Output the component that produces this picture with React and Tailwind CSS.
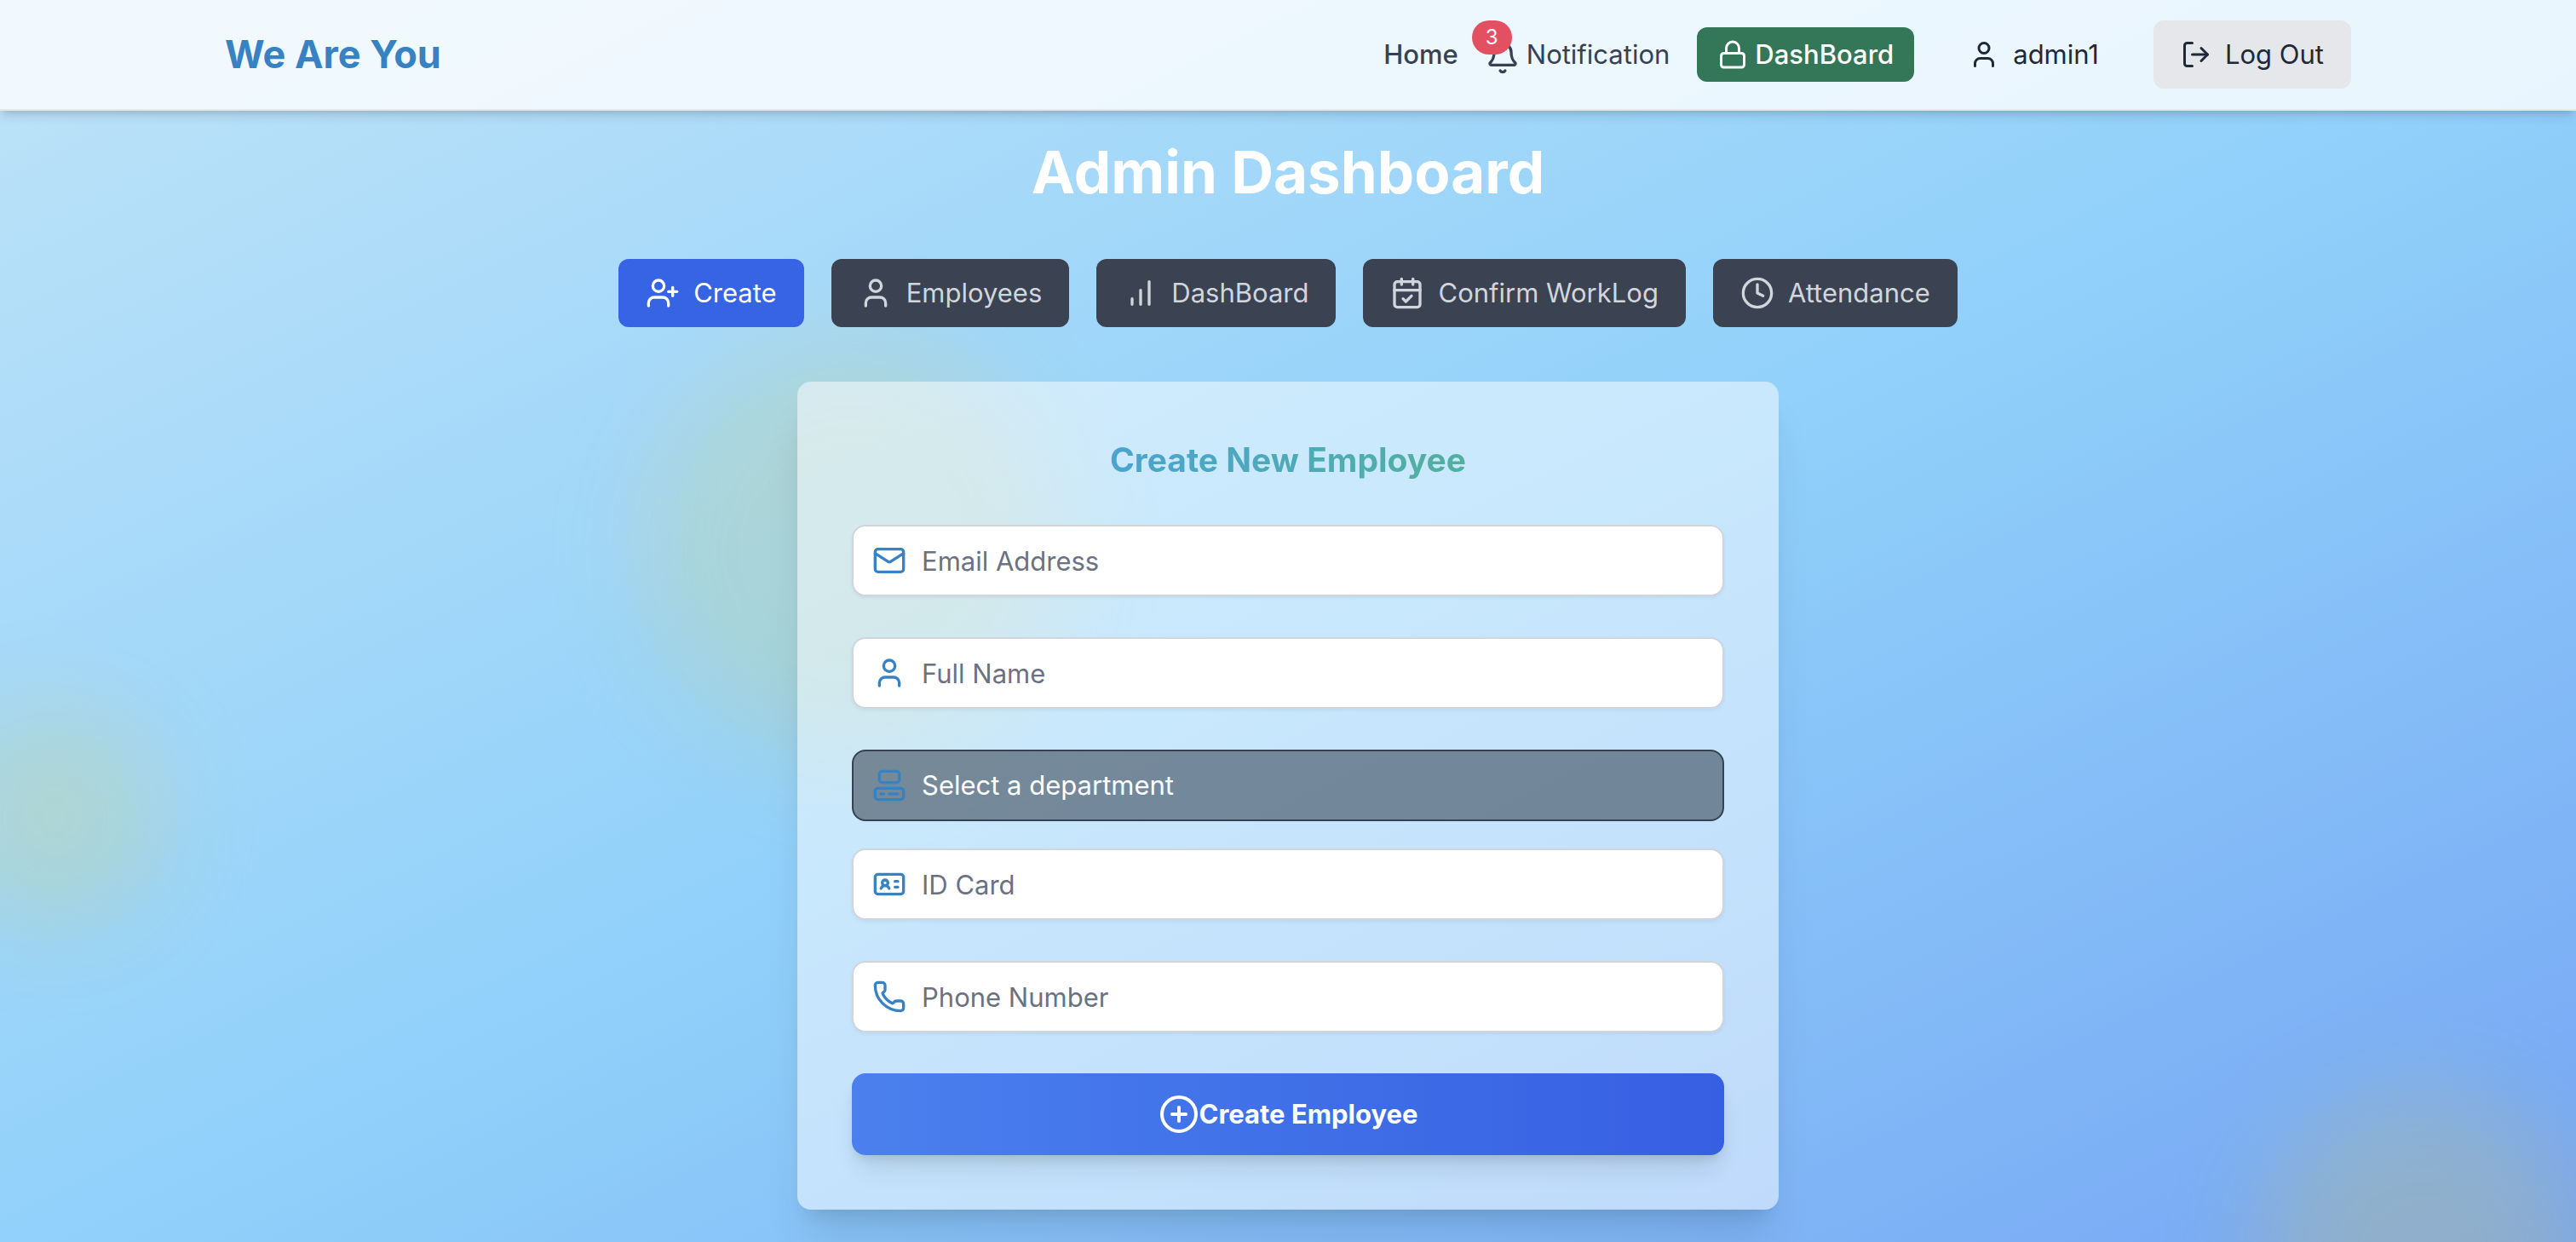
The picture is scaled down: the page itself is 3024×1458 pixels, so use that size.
import React from "react";
import {
  User,
  UserPlus,
  Bell,
  Lock,
  LogOut,
  Mail,
  Phone,
  Clock,
  IdCard,
  Computer,
  CirclePlus,
  CalendarCheck,
} from "lucide-react";

function BarsIcon({ className }) {
  return (
    <svg
      viewBox="0 0 24 24"
      fill="none"
      stroke="currentColor"
      strokeWidth="2"
      strokeLinecap="round"
      strokeLinejoin="round"
      className={className}
      aria-hidden="true"
    >
      <path d="M6 20v-4M12 20V10M18 20V4" />
    </svg>
  );
}

const tabs = [
  { label: "Create", Icon: UserPlus, active: true },
  { label: "Employees", Icon: User },
  { label: "DashBoard", Icon: BarsIcon },
  { label: "Confirm WorkLog", Icon: CalendarCheck },
  { label: "Attendance", Icon: Clock },
];

function Field({ id, label, type = "text", Icon }) {
  return (
    <div className="relative">
      <input
        id={id}
        type={type}
        placeholder={label}
        aria-label={label}
        className="block h-[84px] w-full rounded-2xl border-2 border-gray-300 bg-white pl-20 pr-8 text-gray-800 shadow-[0_2px_4px_rgba(0,0,0,0.06)] placeholder:text-gray-500"
      />
      <Icon className="pointer-events-none absolute left-6 top-1/2 size-10 -translate-y-1/2 text-[#3782c3]" />
    </div>
  );
}

export default function App() {
  return (
    <div className="relative min-h-screen overflow-hidden bg-linear-to-br/srgb from-[#bee3f8] via-[#90d0fa] via-52% to-[#76a6f4] font-['Inter',sans-serif] text-[31px] leading-[48px]">
      <div className="absolute left-1/4 top-[400px] size-[496px] rounded-full bg-[#facc15]/14 blur-[56px]" />
      <div className="absolute -left-16 top-[832px] size-64 rounded-full bg-[#facc15]/16 blur-[56px]" />
      <div className="absolute -bottom-52 -right-3 size-96 rounded-full bg-[#facc15]/18 blur-[56px]" />

      <header className="relative border-b-2 border-gray-200 bg-white/80 shadow-[0_8px_12px_-2px_rgba(0,0,0,0.12),0_4px_8px_-4px_rgba(0,0,0,0.12)]">
        <div className="mx-auto flex h-32 max-w-[2560px] items-center justify-between px-8">
          <a href="#" className="text-[45px] font-bold text-[#3782c3]">
            We Are You
          </a>
          <nav className="flex items-center gap-8 text-gray-700">
            <a href="#" className="font-medium">
              Home
            </a>
            <a href="#" className="relative flex items-center gap-2">
              <Bell className="mt-2 size-10" />
              Notification
              <span className="absolute -left-4 -top-4 rounded-full bg-[#e25062] px-4 py-1 text-[24px] leading-8 text-white">
                3
              </span>
            </a>
            <a
              href="#"
              className="flex h-16 items-center gap-2 rounded-xl bg-[#347758] px-6 font-medium text-white"
            >
              <Lock className="size-9" />
              DashBoard
            </a>
            <a href="#" className="flex h-20 items-center gap-4 px-8 text-gray-800">
              <User className="size-9" />
              admin1
            </a>
            <button
              type="button"
              className="flex h-20 items-center gap-4 rounded-xl bg-[#e5e7eb] px-8 text-gray-800"
            >
              <LogOut className="size-9" />
              Log Out
            </button>
          </nav>
        </div>
      </header>

      <main className="relative flex flex-col items-center px-8 pb-8 pt-8">
        <h1 className="text-[69px] font-bold leading-[80px] text-white">Admin Dashboard</h1>

        <div className="mt-[62px] flex gap-8">
          {tabs.map(({ label, Icon, active }) => (
            <button
              key={label}
              type="button"
              className={
                active
                  ? "flex h-20 items-center gap-4 rounded-xl bg-[#3763e5] px-8 text-white"
                  : "flex h-20 items-center gap-4 rounded-xl bg-[#3b4252] px-8 text-gray-300"
              }
            >
              <Icon className="size-10" />
              {label}
            </button>
          ))}
        </div>

        <form className="mt-16 w-full max-w-[1152px] rounded-2xl bg-white/50 p-16 shadow-[0_40px_50px_-10px_rgba(0,0,0,0.1),0_16px_20px_-12px_rgba(0,0,0,0.1)]">
          <h2 className="mx-auto mb-12 w-fit bg-linear-to-r from-[#4ba3cf] to-[#52b09d] bg-clip-text text-[39px] font-bold leading-[56px] text-transparent">
            Create New Employee
          </h2>
          <div className="flex flex-col gap-12">
            <Field id="email" label="Email Address" type="email" Icon={Mail} />
            <Field id="name" label="Full Name" Icon={User} />
          </div>
          <div className="relative mb-8 mt-12">
            <select
              id="department"
              aria-label="Department"
              className="block h-[84px] w-full appearance-none rounded-2xl border-2 border-gray-700 bg-[#1f2937]/50 pl-20 pr-8 text-white"
            >
              <option>Select a department</option>
            </select>
            <Computer className="pointer-events-none absolute left-6 top-1/2 size-10 -translate-y-1/2 text-[#3782c3]" />
          </div>
          <div className="flex flex-col gap-12">
            <Field id="idcard" label="ID Card" Icon={IdCard} />
            <Field id="phone" label="Phone Number" type="tel" Icon={Phone} />
            <button
              type="submit"
              className="flex h-24 items-center justify-center rounded-2xl bg-linear-to-r from-[#4b80ee] to-[#365fe2] font-bold text-white shadow-[0_20px_30px_-6px_rgba(0,0,0,0.1),0_8px_12px_-4px_rgba(0,0,0,0.1)]"
            >
              <CirclePlus className="size-12" />
              Create Employee
            </button>
          </div>
        </form>
      </main>
    </div>
  );
}
